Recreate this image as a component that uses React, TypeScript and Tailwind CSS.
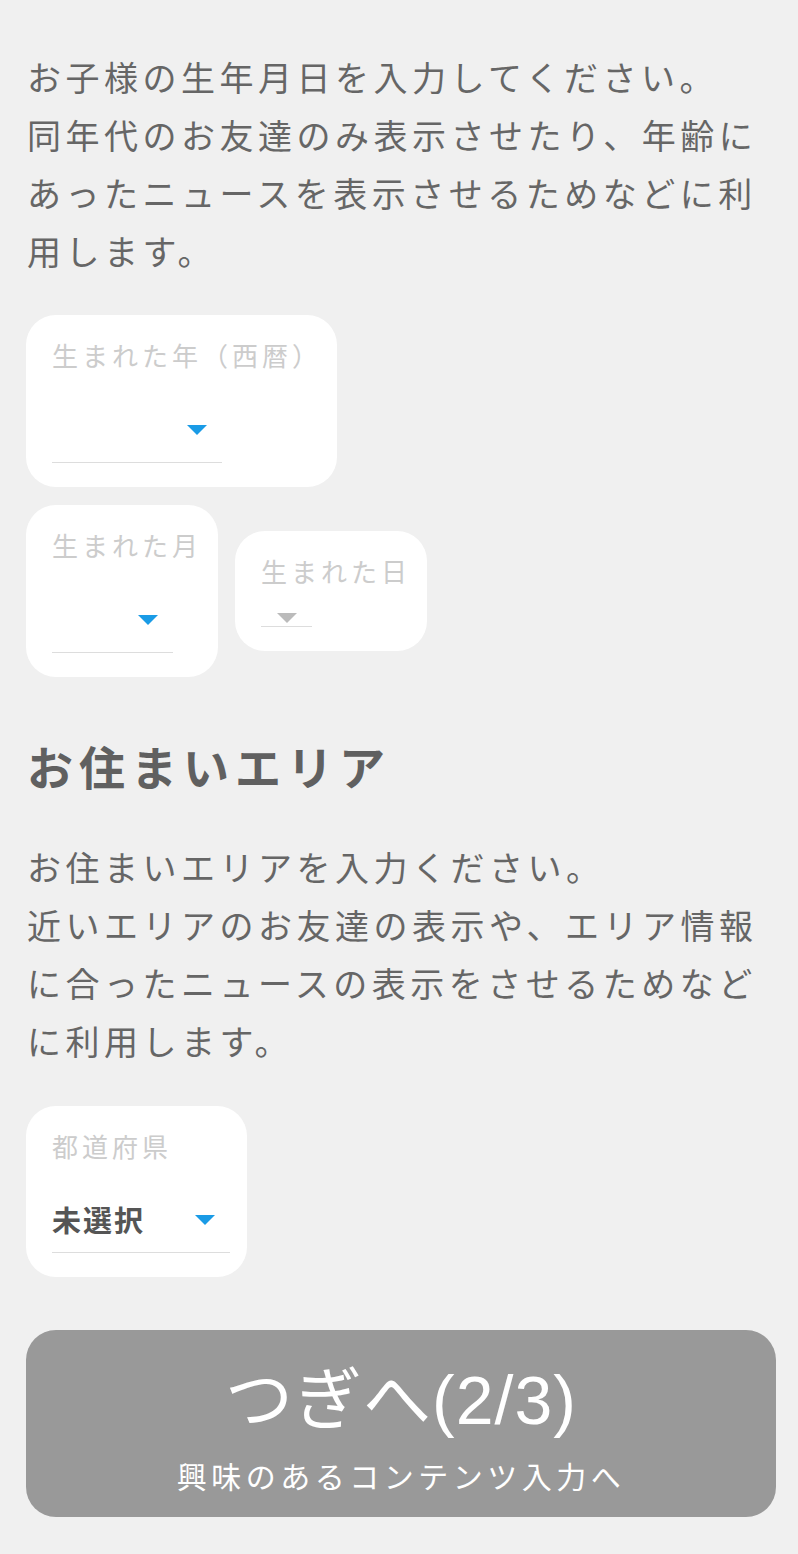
import React from 'react';

function Arrow({ gray }: { gray?: boolean }) {
  return (
    <svg width="20" height="10" viewBox="0 0 20 10" className="block">
      <polygon points="0,0 20,0 10,10" fill={gray ? '#bbbbbb' : '#1a9be6'} />
    </svg>
  );
}

function SelectCard({ label, width, selectWidth, selectHeight, value, gray }: {
  label: string; width: string; selectWidth: string; selectHeight: string; value?: string; gray?: boolean;
}) {
  return (
    <div className={`bg-white rounded-[30px] pt-[26px] pb-[24px] px-[26px] ${width}`}>
      <div className="text-[26px] leading-[28px] tracking-[4px] text-[#cccccc] whitespace-nowrap">{label}</div>
      <div className={`relative border-b border-[#dddddd] ${selectWidth} ${selectHeight}`}>
        {value && (
          <span className="absolute left-0 bottom-[14px] text-[29px] leading-[38px] font-bold tracking-[2px] text-[#555555]">{value}</span>
        )}
        <span className={gray ? 'absolute left-1/2 -translate-x-1/2 bottom-[3px]' : 'absolute right-[15px] bottom-[27px]'}>
          <Arrow gray={gray} />
        </span>
      </div>
    </div>
  );
}

export default function App() {
  return (
    <div className="min-h-[1554px] bg-[#f0f0f0] px-[27px] pt-[48px] pb-[37px] font-['Noto_Sans_CJK_JP','Noto_Sans',sans-serif] text-[#666666]">
      <p className="text-[34px] leading-[58px] tracking-[4.5px]">
        お子様の生年月日を入力してください。<br />
        同年代のお友達のみ表示させたり、年齢にあったニュースを表示させるためなどに利用します。
      </p>

      <div className="mt-[35px] flex flex-col items-start gap-[18px] -ml-px">
        <SelectCard label="生まれた年（西暦）" width="w-[311px]" selectWidth="w-[170px]" selectHeight="h-[94px]" />
        <div className="flex items-center gap-[17px]">
          <SelectCard label="生まれた月" width="w-[192px]" selectWidth="w-[121px]" selectHeight="h-[94px]" />
          <SelectCard label="生まれた日" width="w-[192px]" selectWidth="w-[51px]" selectHeight="h-[42px]" gray />
        </div>
      </div>

      <h2 className="mt-[58px] text-[46px] leading-[60px] tracking-[6px] font-bold text-[#606060]">お住まいエリア</h2>

      <p className="mt-[43px] text-[34px] leading-[58px] tracking-[4.5px]">
        お住まいエリアを入力ください。<br />
        近いエリアのお友達の表示や、エリア情報に合ったニュースの表示をさせるためなどに利用します。
      </p>

      <div className="mt-[36px] -ml-px">
        <SelectCard label="都道府県" width="w-[221px]" selectWidth="w-[178px]" selectHeight="h-[93px]" value="未選択" />
      </div>

      <button className="mt-[53px] -ml-px w-[750px] h-[187px] rounded-[30px] bg-[#999999] text-white flex flex-col items-center pt-[30px]">
        <span className="font-['Liberation_Sans','Noto_Sans_CJK_JP',sans-serif] text-[68px] leading-[80px] tracking-[1px]">つぎへ(2/3)</span>
        <span className="mt-[15px] text-[30px] leading-[40px] tracking-[4.5px]">興味のあるコンテンツ入力へ</span>
      </button>
    </div>
  );
}
